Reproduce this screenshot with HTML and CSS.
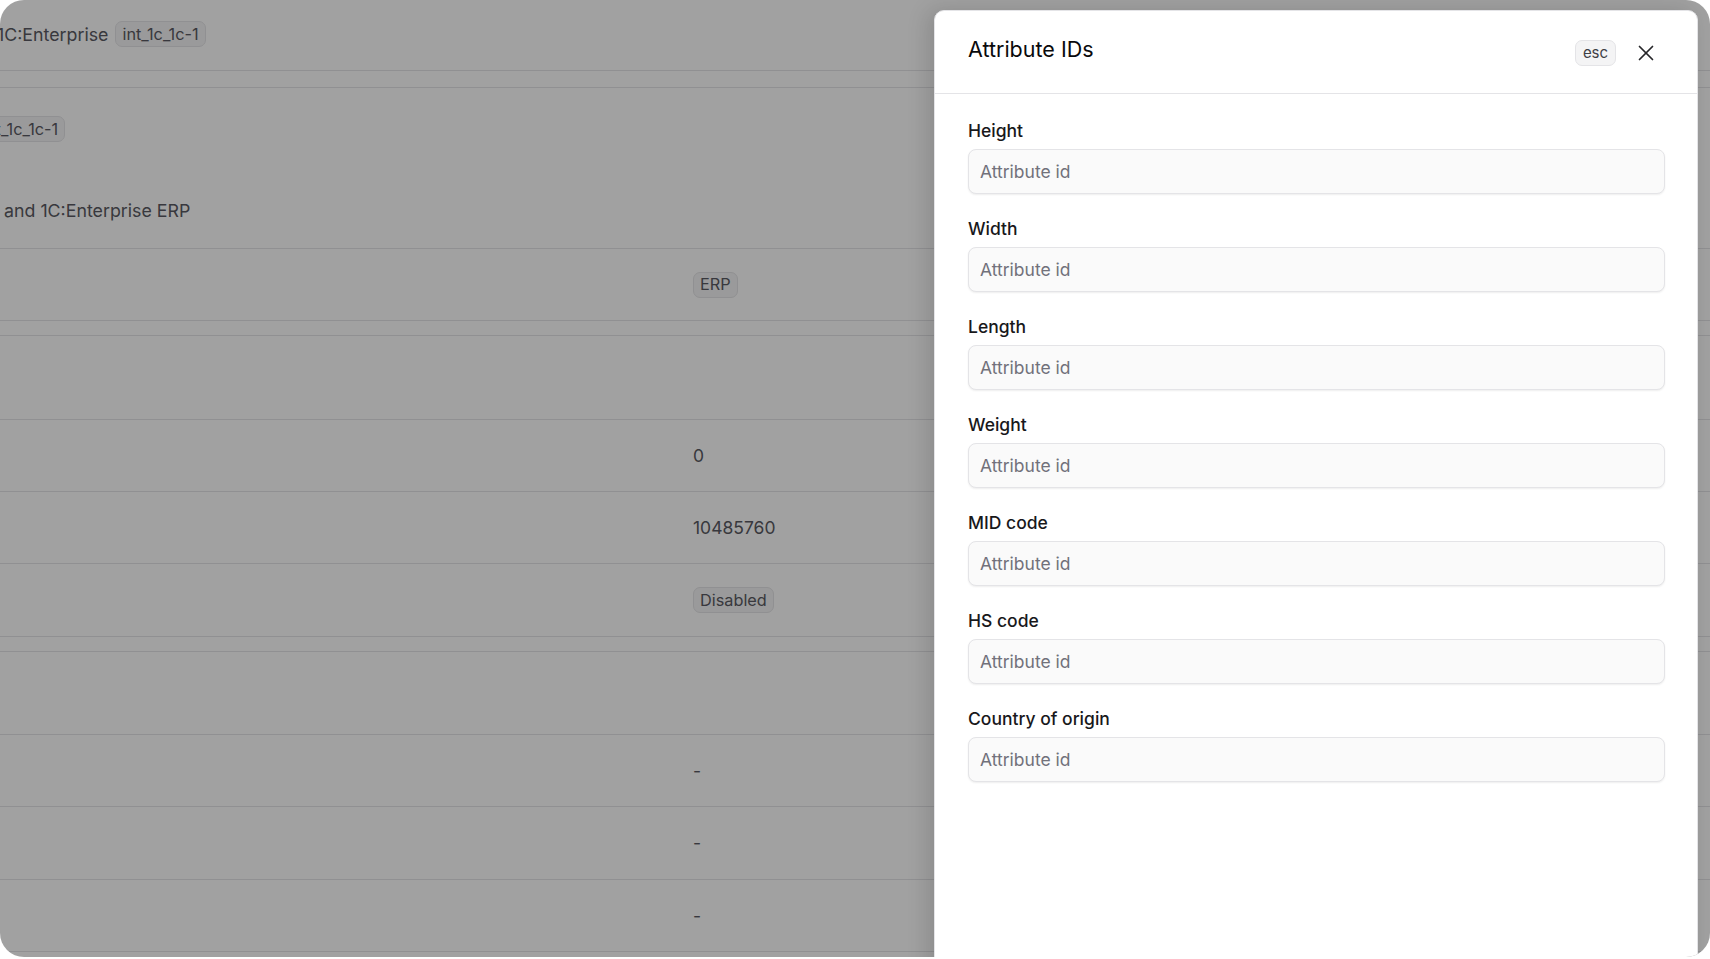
FILE: index.html
```html
<!DOCTYPE html>
<html lang="en">
<head>
    <meta charset="UTF-8">
    <meta name="viewport" content="width=device-width, initial-scale=1.0">
    <title>Attribute IDs</title>
    <link rel="stylesheet" href="styles.css">
</head>
<body>
    <div class="frame">
        <div class="page">
            <div class="page-head">
                <span class="page-title">1C:Enterprise</span>
                <span class="tag">int_1c_1c-1</span>
            </div>

            <div class="card">
                <div class="card-intro">
                    <span class="tag tag-cut">int_1c_1c-1</span>
                    <p class="card-desc">and 1C:Enterprise ERP</p>
                </div>
                <div class="row"><div></div><div><span class="tag">ERP</span></div></div>
            </div>

            <div class="card">
                <div class="row row-head"><div></div><div></div></div>
                <div class="row"><div></div><div>0</div></div>
                <div class="row"><div></div><div>10485760</div></div>
                <div class="row"><div></div><div><span class="tag">Disabled</span></div></div>
            </div>

            <div class="card">
                <div class="row row-head"><div></div><div></div></div>
                <div class="row"><div></div><div>-</div></div>
                <div class="row"><div></div><div>-</div></div>
                <div class="row"><div></div><div>-</div></div>
            </div>
        </div>

        <div class="overlay"></div>

        <div class="sheet">
            <div class="sheet-header">
                <h2 class="sheet-title">Attribute IDs</h2>
                <div class="sheet-actions">
                    <span class="kbd">esc</span>
                    <button class="close-btn" aria-label="Close">
                        <svg width="16" height="16" viewBox="0 0 16 16" fill="none" stroke="currentColor" stroke-width="1.7" stroke-linecap="round">
                            <path d="M14.5 1.5 1.5 14.5"/>
                            <path d="m1.5 1.5 13 13"/>
                        </svg>
                    </button>
                </div>
            </div>
            <form class="sheet-body">
                <div class="field">
                    <label class="field-label">Height</label>
                    <input class="field-input" type="text" placeholder="Attribute id">
                </div>
                <div class="field">
                    <label class="field-label">Width</label>
                    <input class="field-input" type="text" placeholder="Attribute id">
                </div>
                <div class="field">
                    <label class="field-label">Length</label>
                    <input class="field-input" type="text" placeholder="Attribute id">
                </div>
                <div class="field">
                    <label class="field-label">Weight</label>
                    <input class="field-input" type="text" placeholder="Attribute id">
                </div>
                <div class="field">
                    <label class="field-label">MID code</label>
                    <input class="field-input" type="text" placeholder="Attribute id">
                </div>
                <div class="field">
                    <label class="field-label">HS code</label>
                    <input class="field-input" type="text" placeholder="Attribute id">
                </div>
                <div class="field">
                    <label class="field-label">Country of origin</label>
                    <input class="field-input" type="text" placeholder="Attribute id">
                </div>
            </form>
        </div>
    </div>
</body>
</html>
```

FILE: styles.css
```css
* {
    margin: 0;
    padding: 0;
    box-sizing: border-box;
}

body {
    background: #fff;
    font-family: Inter, "Noto Sans", sans-serif;
    font-size: 17.5px;
    overflow: hidden;
}

.frame {
    position: relative;
    width: 1710px;
    height: 957px;
    border-radius: 24px;
    overflow: hidden;
    background: #fff;
}

/* background page */
.page {
    color: #5a5a62;
}

.page-head {
    height: 71px;
    display: flex;
    align-items: center;
    gap: 7px;
    padding-bottom: 2px;
    margin-left: -3px;
    font-size: 17.8px;
    border-bottom: 1px solid #e4e4e7;
}

.tag {
    display: inline-flex;
    align-items: center;
    height: 26px;
    padding: 0 6px;
    border: 1px solid #e4e4e7;
    border-radius: 7px;
    background: #f4f4f5;
    font-size: 16.3px;
    line-height: 1;
}

.card {
    margin-top: 16px;
    border-top: 1px solid #e4e4e7;
    border-bottom: 1px solid #e4e4e7;
}

.card + .card {
    margin-top: 14px;
}

.card-intro {
    height: 160px;
    padding-top: 28px;
}

.tag-cut {
    margin-left: -25px;
}

.card-desc {
    margin-top: 56px;
    padding-left: 4px;
    line-height: 26px;
    font-size: 17.8px;
}

.row {
    display: grid;
    grid-template-columns: 693px 1fr;
    align-items: center;
    height: 72.25px;
    border-top: 1px solid #e4e4e7;
}

.card > .row:first-child {
    border-top: none;
}

.row-head {
    height: 82.5px;
}

.overlay {
    position: absolute;
    inset: 0;
    background: rgba(0, 0, 0, 0.37);
}

/* sheet */
.sheet {
    position: absolute;
    top: 10px;
    left: 934px;
    width: 764px;
    bottom: -20px;
    background: #fff;
    border: 1px solid #e4e4e7;
    border-radius: 10px 10px 0 0;
    box-shadow: -6px 0 22px rgba(0, 0, 0, 0.14);
}

.sheet-header {
    height: 83px;
    display: flex;
    align-items: center;
    justify-content: space-between;
    padding: 0 35px 0 33px;
    border-bottom: 1px solid #e4e4e7;
}

.sheet-title {
    font-size: 21.5px;
    font-weight: 400;
    color: #09090b;
    margin-bottom: 6px;
}

.sheet-actions {
    display: flex;
    align-items: center;
    gap: 14px;
    margin-top: 1px;
}

.kbd {
    display: inline-flex;
    align-items: center;
    justify-content: center;
    width: 41px;
    height: 26px;
    border: 1px solid #e4e4e7;
    border-radius: 7px;
    background: #f4f4f5;
    color: #3f3f46;
    font-size: 15px;
}

.close-btn {
    width: 32px;
    height: 32px;
    display: flex;
    align-items: center;
    justify-content: center;
    border: none;
    background: none;
    color: #27272a;
    cursor: pointer;
}

.sheet-body {
    display: flex;
    flex-direction: column;
    gap: 22px;
    padding: 24px 32px 0 33px;
}

.field {
    display: flex;
    flex-direction: column;
    gap: 5px;
}

.field-label {
    font-size: 17.5px;
    font-weight: 500;
    line-height: 26px;
    color: #18181b;
}

.field-input {
    height: 45px;
    padding: 0 11px;
    border: 1px solid #e4e4e7;
    border-radius: 8px;
    background: #fafafa;
    box-shadow: 0 1px 2px rgba(0, 0, 0, 0.07);
    font-family: inherit;
    font-size: 17.5px;
    color: #18181b;
    outline: none;
}

.field-input::placeholder {
    color: #71717a;
}
```
